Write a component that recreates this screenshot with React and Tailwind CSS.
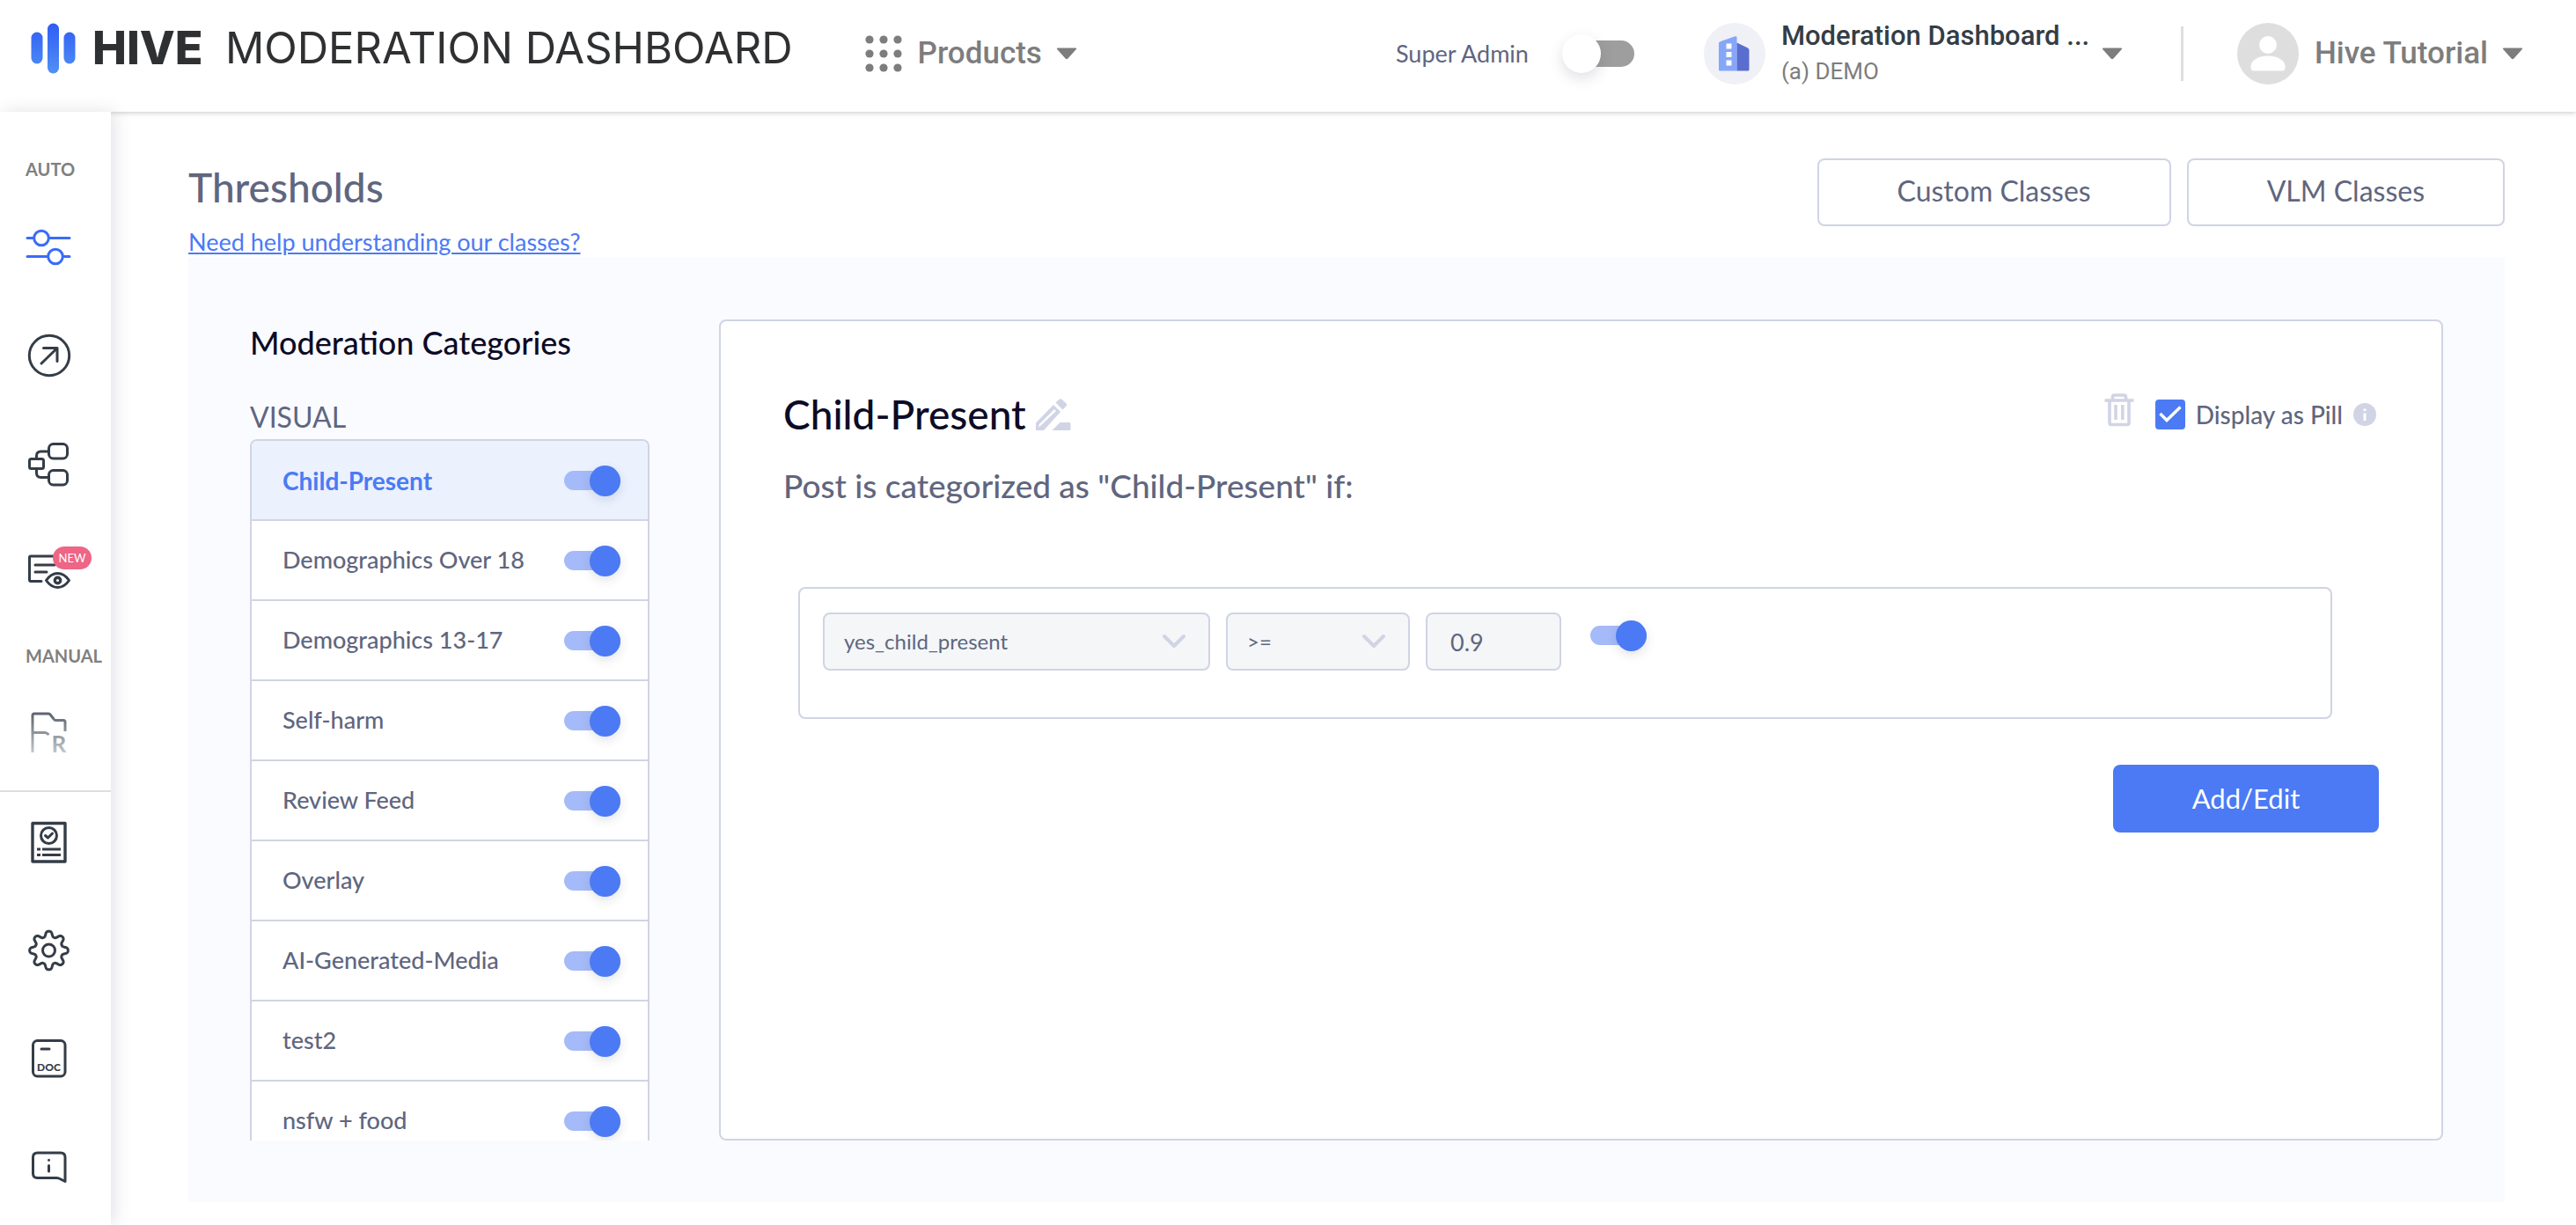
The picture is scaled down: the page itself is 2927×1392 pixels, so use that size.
import React, { useState } from 'react';

const categories = [
    'Child-Present',
    'Demographics Over 18',
    'Demographics 13-17',
    'Self-harm',
    'Review Feed',
    'Overlay',
    'AI-Generated-Media',
    'test2',
    'nsfw + food',
];

// Eight rounded teeth around the centre of a 52px box
const gearPath = (() => {
    const points = [];
    for (let i = 0; i < 240; i++) {
        const a = (i / 240) * Math.PI * 2;
        const r = 18.8 + 3.4 * Math.tanh(1.4 * Math.cos(8 * a));
        points.push(`${(26.5 + r * Math.sin(a)).toFixed(2)} ${(26 - r * Math.cos(a)).toFixed(2)}`);
    }
    return `M${points.join('L')}Z`;
})();

const SideIcon = ({ label, active, children }) => (
    <button aria-label={label} className={`relative block size-[52px] ${active ? 'text-[#3b6cf6]' : 'text-[#343d47]'}`}>
        <svg className="size-[52px] overflow-visible" viewBox="0 0 52 52" fill="none" stroke="currentColor" strokeWidth="3" strokeLinecap="round" strokeLinejoin="round">
            {children}
        </svg>
    </button>
);

const Switch = ({ label, checked, onChange }) => (
    <input
        type="checkbox"
        role="switch"
        aria-label={label}
        checked={checked}
        onChange={onChange}
        className="relative h-[22px] w-16 shrink-0 cursor-pointer appearance-none rounded-full bg-[#9e9e9e] before:absolute before:-top-[6px] before:left-0 before:size-[35px] before:rounded-full before:bg-white before:shadow-[0_4px_12px_rgba(60,64,90,0.15)] checked:bg-[#a5baf8] checked:before:left-auto checked:before:right-0 checked:before:bg-[#4b7af4]"
    />
);

const Caret = () => (
    <svg className="h-[14px] w-6 shrink-0" viewBox="0 0 24 14" fill="#7d7d7d">
        <path d="M2 0.5H22Q24 0.5 22.8 2L13.4 12.6Q12 14 10.6 12.6L1.2 2Q0 0.5 2 0.5Z" />
    </svg>
);

const RuleSelect = ({ label, value, className }) => (
    <div className={`relative ${className}`}>
        <select
            aria-label={label}
            defaultValue={value}
            className="h-[66px] w-full appearance-none rounded-lg border-2 border-[#d0d4e4] bg-[#f4f6f8] px-[22px] text-2xl text-[#5f667f]"
        >
            <option>{value}</option>
        </select>
        <svg className="pointer-events-none absolute right-[27px] top-[24px] h-[18px] w-7" viewBox="0 0 28 18" fill="none" stroke="#d0d4e4" strokeWidth="4" strokeLinecap="round" strokeLinejoin="round">
            <path d="M3 3L14 14L25 3" />
        </svg>
    </div>
);

const Header = () => {
    const [superAdmin, setSuperAdmin] = useState(false);

    return (
        <header className="flex h-[127px] shrink-0 items-center bg-white pb-[5px] pl-[35px] pr-[60px] font-['Roboto',sans-serif] shadow-[0_1px_6px_rgba(0,0,0,0.22)]">
            {/* Logo */}
            <a href="#" className="mb-3 flex items-center whitespace-nowrap font-['Inter',sans-serif] text-[49px] leading-[58px] text-[#2f3032]">
                <svg className="mr-[18px] h-[58px] w-[52px]" viewBox="0 0 52 58">
                    <defs>
                        <linearGradient id="logo" x1="0" y1="0" x2="0" y2="58" gradientUnits="userSpaceOnUse">
                            <stop offset="0" stopColor="#2f5cf5" />
                            <stop offset="1" stopColor="#5191f5" />
                        </linearGradient>
                    </defs>
                    <rect x="0.5" y="10.5" width="13" height="36" rx="6.5" fill="url(#logo)" />
                    <rect x="19" y="0.5" width="13" height="57" rx="6.5" fill="url(#logo)" />
                    <rect x="37.5" y="10.5" width="13" height="36" rx="6.5" fill="url(#logo)" />
                </svg>
                <span className="w-[151px] text-[52px] font-extrabold">HIVE</span>
                <span>MODERATION DASHBOARD</span>
            </a>

            {/* Product switcher */}
            <button className="ml-[82px] flex items-center text-[35px] font-medium text-[#7d7d7d]">
                <svg className="mr-[18px] size-[42px]" viewBox="0 0 42 42" fill="currentColor">
                    {[5, 21, 37].map((y) => [5, 21, 37].map((x) => <circle key={`${x}-${y}`} cx={x} cy={y} r="4.6" />))}
                </svg>
                <span className="mr-4">Products</span>
                <Caret />
            </button>

            <div className="ml-auto flex items-center whitespace-nowrap">
                <label htmlFor="super-admin" className="mr-[39px] font-['Lato',sans-serif] text-[27px] text-[#5f667f]">Super Admin</label>
                <input
                    id="super-admin"
                    type="checkbox"
                    role="switch"
                    checked={superAdmin}
                    onChange={() => setSuperAdmin(!superAdmin)}
                    className="relative mr-[79px] h-[30px] w-[81px] appearance-none rounded-full bg-[#9e9e9e] before:absolute before:-left-px before:-top-[7px] before:size-11 before:rounded-full before:bg-white before:shadow-[0_6px_16px_rgba(60,64,90,0.16)] checked:bg-[#a5baf8] checked:before:left-auto checked:before:right-0"
                />
                <button className="flex items-center text-left">
                    <span className="mr-[18px] flex size-[70px] items-center justify-center rounded-full bg-[#f0f1f6]">
                        <svg className="h-10 w-[35px]" viewBox="0 0 35 40">
                            <path d="M0 7.5L2 6L18.5 0.3Q20.5 0 20.5 1.5V39.5H1Q0 39.5 0 38.5Z" fill="#86a6f9" />
                            <path d="M20.5 7.5L33 13.5Q34.5 14.5 34.5 16V38Q34.5 39.5 33 39.5H20.5Z" fill="#5b6dce" />
                            <path d="M8.5 8.5H14.5V14.5H8.5ZM8.5 18H14.5V24H8.5ZM8.5 27.5H14.5V33.5H8.5Z" fill="#fff" />
                        </svg>
                    </span>
                    <span className="mr-4 w-[348px]">
                        <span className="block text-[31px] font-medium leading-10 text-[#343d47]">Moderation Dashboard ...</span>
                        <span className="block text-[26px] leading-10 text-[#7d7d7d]">(a) DEMO</span>
                    </span>
                    <Caret />
                </button>
                <div className="ml-[66px] mr-[61px] h-[62px] w-[3px] bg-[#dedede]" />
                <button className="flex items-center text-[35px] font-medium text-[#7d7d7d]">
                    <span className="mr-[18px] flex size-[70px] items-center justify-center rounded-full bg-[#dedede]">
                        <svg className="size-10" viewBox="0 0 40 40" fill="#fff">
                            <circle cx="20" cy="10" r="10" />
                            <path d="M0.5 34V36Q0.5 39.5 4 39.5H36Q39.5 39.5 39.5 36V34C39 27 30 22.5 20 22.5S1 27 0.5 34Z" />
                        </svg>
                    </span>
                    <span className="mr-4">Hive Tutorial</span>
                    <Caret />
                </button>
            </div>
        </header>
    );
};

const Sidebar = () => (
    <aside className="z-10 w-[126px] shrink-0 bg-white pt-[51px] shadow-[4px_0_18px_rgba(60,64,90,0.15)]">
        <nav className="pl-[29px]">
            <p className="text-xl font-bold leading-7 text-[#808080]">AUTO</p>
            <div className="mt-[49px] flex flex-col gap-[71px]">
                <SideIcon label="Thresholds" active>
                    <path d="M2 15.5H9M27 15.5H50M2 36.5H25M43 36.5H50" />
                    <circle cx="18" cy="15.5" r="8.3" />
                    <circle cx="34" cy="36.5" r="8.3" />
                </SideIcon>
                <SideIcon label="Actions">
                    <circle cx="27" cy="26" r="22.7" />
                    <path d="M18 35L36 17.5M20.5 17.5H36V32.5" />
                </SideIcon>
                <SideIcon label="Flow">
                    <rect x="4.5" y="20.5" width="16" height="11" rx="2" />
                    <rect x="26.5" y="3.5" width="21" height="16.5" rx="5" />
                    <rect x="26.5" y="33.5" width="21" height="16.5" rx="5" />
                    <path d="M12.5 20V17Q12.5 12 17.5 12H26M12.5 32V36.5Q12.5 41.5 17.5 41.5H26" />
                </SideIcon>
                <div className="relative">
                    <SideIcon label="Review feed">
                        <path d="M40 8H6Q4.5 8 4.5 9.5V35Q4.5 36.5 6 36.5H18M11 18H33M11 26H24" />
                        <path d="M23.5 35.5Q29 27.5 36.5 27.5T49.5 35.5Q44 43.5 36.5 43.5T23.5 35.5Z" />
                        <circle cx="36.5" cy="35.5" r="3.2" strokeWidth="3.4" />
                    </SideIcon>
                    <span className="absolute -top-[3px] left-[31px] w-11 rounded-full bg-[#ee6585] text-center text-[13px] leading-[26px] text-white">NEW</span>
                </div>
            </div>
            <p className="mt-[55px] text-xl font-bold leading-7 text-[#808080]">MANUAL</p>
            <div className="mt-12">
                <SideIcon label="Manual review">
                    <defs>
                        <linearGradient id="fade" x1="0" y1="3" x2="0" y2="49" gradientUnits="userSpaceOnUse">
                            <stop offset="0" stopColor="#5c646c" />
                            <stop offset="1" stopColor="#c4c7ca" />
                        </linearGradient>
                    </defs>
                    <path d="M8 48V6Q8 4 10 4H26Q27.5 4 28.5 5.5L32 10Q33 11.5 34.5 11.5H43Q45 11.5 45 13.5V24M8 25.5H22Q24 25.5 26.5 28" stroke="url(#fade)" strokeLinecap="butt" />
                    <text x="29.5" y="48" fontSize="26" fontWeight="700" fill="url(#fade)" stroke="none">R</text>
                </SideIcon>
            </div>
        </nav>
        <nav className="mt-[39px] flex flex-col gap-[71px] border-t-2 border-[#dedede] pl-[29px] pt-[31px]">
            <SideIcon label="Reports">
                <rect x="8" y="4.5" width="37" height="43.5" strokeWidth="3.4" />
                <circle cx="26.5" cy="18.5" r="9" />
                <path d="M22.5 18.5L25.5 21L30.5 16" />
                <path d="M13 34H17M19 34H40M13 40.5H17M19 40.5H40" strokeLinecap="butt" strokeWidth="3.2" />
            </SideIcon>
            <SideIcon label="Settings">
                <path d={gearPath} />
                <circle cx="26.5" cy="26" r="7" />
            </SideIcon>
            <SideIcon label="Documentation">
                <rect x="8.5" y="5.5" width="36.5" height="40.5" rx="5" />
                <path d="M18 15H27" />
                <text x="26.5" y="39.5" textAnchor="middle" fontSize="12" fontWeight="900" fill="currentColor" stroke="none">DOC</text>
            </SideIcon>
            <SideIcon label="Help">
                <path d="M13.5 10H40Q45 10 45 15V42.5L38 39Q37 38.5 35 38.5H13.5Q8.5 38.5 8.5 33.5V15Q8.5 10 13.5 10Z" />
                <path d="M26.5 18.2V18.3M26.5 24.5V31" />
            </SideIcon>
        </nav>
    </aside>
);

const App = () => {
    const [selected, setSelected] = useState('Child-Present');
    const [enabled, setEnabled] = useState(() => categories.map(() => true));
    const [ruleOn, setRuleOn] = useState(true);

    const toggleCategory = (index) => {
        setEnabled(enabled.map((on, i) => (i === index ? !on : on)));
    };

    return (
        <div className="flex h-screen flex-col overflow-hidden bg-white font-['Lato',sans-serif] text-[#5f667f]">
            <Header />
            <div className="flex min-h-0 flex-1">
                <Sidebar />
                <main className="flex min-w-0 flex-1 flex-col pb-[26px] pl-[88px] pr-[81px]">
                    {/* Page title */}
                    <div className="flex h-[166px] shrink-0 justify-between">
                        <div className="pt-14">
                            <h1 className="text-[46px] font-medium leading-[60px]">Thresholds</h1>
                            <a href="#" className="mt-[14px] block text-[27px] leading-9 text-[#4b7af4] underline">Need help understanding our classes?</a>
                        </div>
                        <div className="flex items-start gap-[18px] pt-[53px] text-[32px]">
                            <button className="h-[77px] rounded-lg border-2 border-[#d0d4e4] px-[89px] pb-1">Custom Classes</button>
                            <button className="h-[77px] rounded-lg border-2 border-[#d0d4e4] px-[89px] pb-1">VLM Classes</button>
                        </div>
                    </div>

                    <div className="flex min-h-0 flex-1 gap-[79px] bg-[#fafbff] p-[70px]">
                        {/* Category list */}
                        <div className="flex w-[454px] shrink-0 flex-col">
                            <h2 className="text-4xl font-medium leading-[52px] text-[#0d0b26]">Moderation Categories</h2>
                            <h3 className="mt-9 pb-0.5 text-[32px] leading-[46px]">VISUAL</h3>
                            <ul className="min-h-0 flex-1 overflow-hidden rounded-t-lg border-x-2 border-t-2 border-[#d0d4e4] bg-white">
                                {categories.map((name, index) => (
                                    <li
                                        key={name}
                                        className={`flex h-[91px] items-center justify-between border-b-2 border-[#d0d4e4] pl-[35px] pr-[31px] ${selected === name ? 'bg-[#ebf1fd]' : ''}`}
                                    >
                                        <button
                                            className={selected === name ? 'text-[28px] font-bold text-[#4b7af4]' : 'text-[27px] font-medium'}
                                            onClick={() => setSelected(name)}
                                        >
                                            {name}
                                        </button>
                                        <Switch label={name} checked={enabled[index]} onChange={() => toggleCategory(index)} />
                                    </li>
                                ))}
                            </ul>
                        </div>

                        {/* Category rules */}
                        <section className="flex min-w-0 flex-1 flex-col rounded-lg border-2 border-[#d0d4e4] bg-white px-[71px] pt-[76px]">
                            <div className="flex items-center justify-between">
                                <div className="flex items-center gap-[11px]">
                                    <h2 className="text-[46px] font-medium leading-[60px] text-[#0d0b26]">{selected}</h2>
                                    <button aria-label="Rename category">
                                        <svg className="h-9 w-10" viewBox="0 0 40 36" fill="#d0d4e4">
                                            <path fillRule="evenodd" d="M0 36V27.5L20 7L28 15L9 36ZM3.5 32.5L23 14L21 12L3.5 29.5Z" />
                                            <path d="M22.5 4.5L26.5 0.8Q28 -0.5 29.5 0.8L34.5 5.5Q36 7 34.5 8.5L30.5 12.5Z" />
                                            <path d="M18.5 36L27.5 27H38Q39.5 27 39.5 28.5V34.5Q39.5 36 38 36Z" />
                                        </svg>
                                    </button>
                                </div>
                                <div className="flex items-center pr-[3px]">
                                    <button aria-label="Delete category" className="mb-2.5 mr-6">
                                        <svg className="h-[38px] w-[34px]" viewBox="0 0 34 38" fill="none" stroke="#d0d4e4" strokeWidth="3.6">
                                            <path d="M0.5 8H33.5M9.5 8V4Q9.5 2 11.5 2H22.5Q24.5 2 24.5 4V8M6 8V33.5Q6 35.5 8 35.5H26Q28 35.5 28 33.5V8M13 13V30M20.8 13V30" />
                                        </svg>
                                    </button>
                                    <span className="relative flex">
                                        <input id="display-pill" type="checkbox" defaultChecked className="peer size-[34px] appearance-none rounded-sm border-2 border-[#4b7af4] checked:bg-[#4b7af4]" />
                                        <svg className="pointer-events-none absolute inset-0 hidden size-[34px] peer-checked:block" viewBox="0 0 34 34" fill="none" stroke="#fff" strokeWidth="3.4">
                                            <path d="M5.5 16L13 23.5L28.5 8.5" />
                                        </svg>
                                    </span>
                                    <label htmlFor="display-pill" className="mx-3 text-[28px] font-medium">Display as Pill</label>
                                    <svg className="size-[26px]" viewBox="0 0 26 26">
                                        <circle cx="13" cy="13" r="13" fill="#d0d4e4" />
                                        <path d="M13 6.5V9M13 11.5V20" stroke="#fff" strokeWidth="3" />
                                    </svg>
                                </div>
                            </div>
                            <p className="mt-[26px] text-[37px] font-medium leading-[50px]">Post is categorized as "{selected}" if:</p>

                            <div className="ml-[17px] mr-[53px] mt-[90px] flex h-[150px] items-start rounded-lg border-2 border-[#d0d4e4] pl-[26px] pt-[27px]">
                                <RuleSelect label="Class" value="yes_child_present" className="w-[440px]" />
                                <RuleSelect label="Comparison" value=">=" className="ml-[18px] w-[209px]" />
                                <input
                                    aria-label="Threshold"
                                    defaultValue="0.9"
                                    className="ml-[18px] mr-[33px] h-[66px] w-[154px] rounded-lg border-2 border-[#d0d4e4] bg-[#f4f6f8] px-[26px] text-[27px]"
                                />
                                <div className="flex h-[52px] items-center">
                                    <Switch label="Rule enabled" checked={ruleOn} onChange={() => setRuleOn(!ruleOn)} />
                                </div>
                            </div>

                            <button className="mt-[52px] h-[77px] w-[302px] self-end rounded-lg bg-[#4b7af4] text-[31px] text-white">Add/Edit</button>
                        </section>
                    </div>
                </main>
            </div>
        </div>
    );
};

export default App;
